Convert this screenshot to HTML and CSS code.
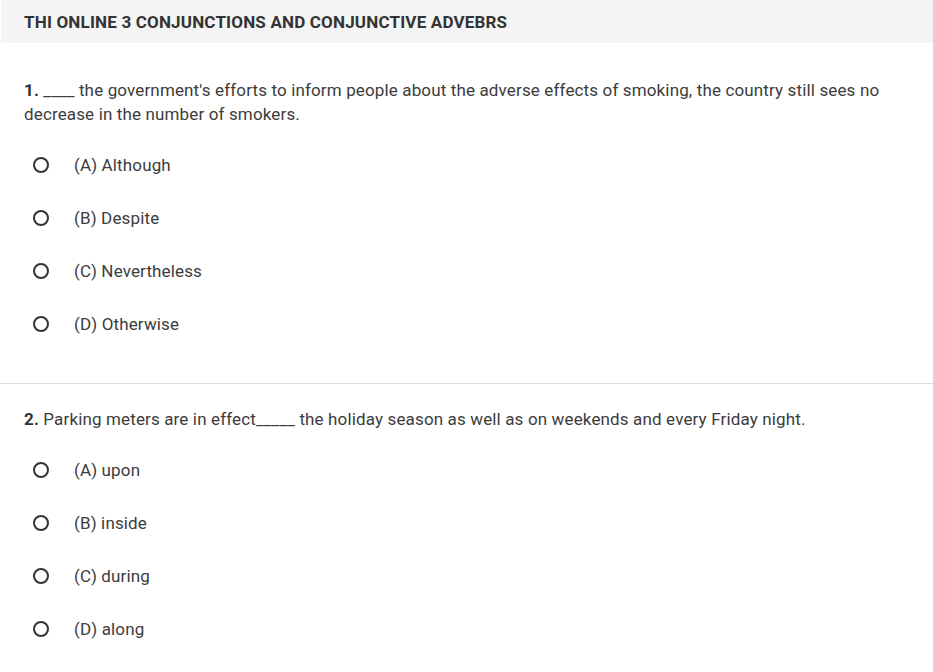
FILE: index.html
```html
<!DOCTYPE html>
<html>
<head>
<meta charset="utf-8">
<link rel="stylesheet" href="styles.css">
</head>
<body>
<div class="header"><h1 class="title">THI ONLINE 3 CONJUNCTIONS AND CONJUNCTIVE ADVEBRS</h1></div>
<div class="question">
  <p class="qtext"><b>1.</b> ____ the government's efforts to inform people about the adverse effects of smoking, the country still sees no decrease in the number of smokers.</p>
  <ul class="options">
    <li class="opt"><span class="radio"></span><span>(A) Although</span></li>
    <li class="opt"><span class="radio"></span><span>(B) Despite</span></li>
    <li class="opt"><span class="radio"></span><span>(C) Nevertheless</span></li>
    <li class="opt"><span class="radio"></span><span>(D) Otherwise</span></li>
  </ul>
</div>
<div class="question sep">
  <p class="qtext"><b>2.</b> Parking meters are in effect_____ the holiday season as well as on weekends and every Friday night.</p>
  <ul class="options">
    <li class="opt"><span class="radio"></span><span>(A) upon</span></li>
    <li class="opt"><span class="radio"></span><span>(B) inside</span></li>
    <li class="opt"><span class="radio"></span><span>(C) during</span></li>
    <li class="opt"><span class="radio"></span><span>(D) along</span></li>
  </ul>
</div>
</body>
</html>
```
FILE: styles.css
```css
html, body { margin: 0; padding: 0; background: #fff; }
body { font-family: Roboto, "Liberation Sans", sans-serif; color: #333; }
.header { background: #f4f4f4; height: 43px; margin-left: 1px; display: flex; align-items: center; padding-left: 23px; }
.title { margin: 0; font-size: 17px; font-weight: 700; color: #333; letter-spacing: 0.18px; }
.question { padding: 35px 24px 0 24px; }
.question.sep { border-top: 1px solid #dcdcdc; margin-top: 33px; padding-top: 23px; }
.qtext { margin: 0; font-size: 17px; line-height: 24px; color: #3c3c3c; padding-right: 0; letter-spacing: 0.14px; }
.qtext b { font-weight: 700; color: #333; }
.options { list-style: none; margin: 12px 0 0 0; padding: 0; }
.opt { display: flex; align-items: center; height: 53px; font-size: 17px; color: #3c3c3c; letter-spacing: 0.14px; }
.radio { width: 12px; height: 12px; border: 2px solid #333; border-radius: 50%; margin-left: 9px; margin-right: 25px; flex: none; }
```
